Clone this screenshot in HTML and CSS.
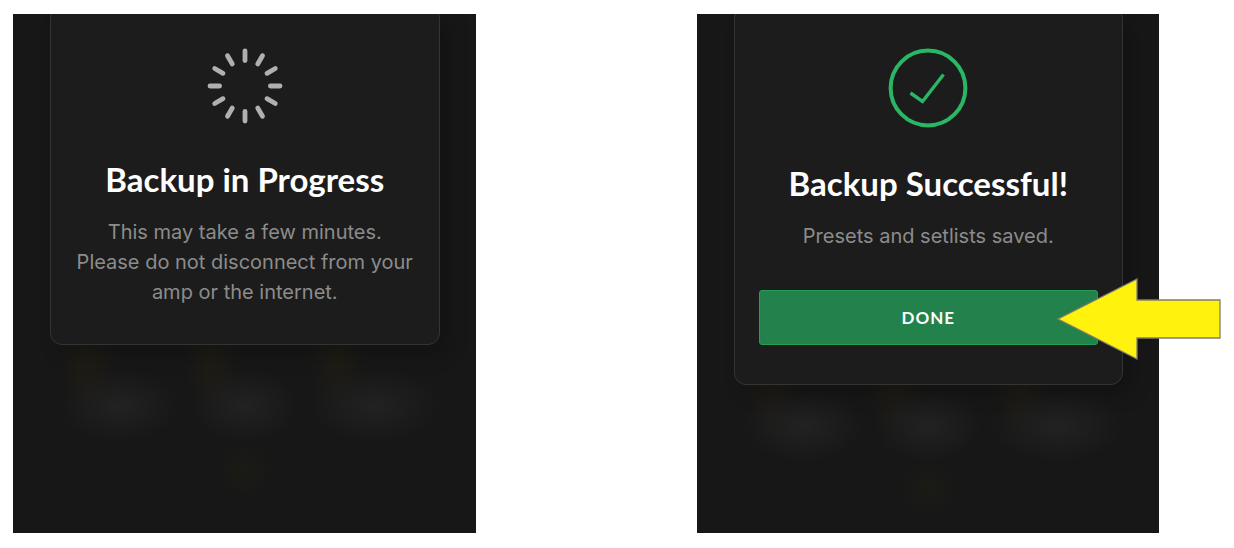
FILE: index.html
```html
<!DOCTYPE html>
<html lang="en">
<head>
<meta charset="utf-8">
<meta name="viewport" content="width=device-width, initial-scale=1">
<title>Backup</title>
<link rel="stylesheet" href="styles.css">
</head>
<body>
<main class="steps">
  <section class="step">
    <div class="screen">
      <div class="backdrop backdrop-progress" aria-hidden="true"></div>
      <div class="card" role="status">
        <svg class="icon" width="76" height="76" viewBox="-38 -38 76 76" fill="none" stroke="#b0b0b0" stroke-width="4.8" stroke-linecap="round" aria-hidden="true">
          <path id="spoke" d="M0-35V-25.4"/>
          <use href="#spoke" transform="rotate(30)"/>
          <use href="#spoke" transform="rotate(60)"/>
          <use href="#spoke" transform="rotate(90)"/>
          <use href="#spoke" transform="rotate(120)"/>
          <use href="#spoke" transform="rotate(150)"/>
          <use href="#spoke" transform="rotate(180)"/>
          <use href="#spoke" transform="rotate(210)"/>
          <use href="#spoke" transform="rotate(240)"/>
          <use href="#spoke" transform="rotate(270)"/>
          <use href="#spoke" transform="rotate(300)"/>
          <use href="#spoke" transform="rotate(330)"/>
        </svg>
        <h1 class="title">Backup in Progress</h1>
        <p class="message">This may take a few minutes.<br>Please do not disconnect from your<br>amp or the internet.</p>
      </div>
    </div>
  </section>
  <section class="step">
    <div class="screen">
      <div class="backdrop backdrop-done" aria-hidden="true"></div>
      <div class="card">
        <svg class="icon" width="80" height="80" viewBox="0 0 80 80" fill="none" stroke="#29b765" aria-hidden="true">
          <circle cx="40" cy="40" r="37.4" stroke-width="4"/>
          <path d="M22.5 45 34.5 53.5 55.5 26.5" stroke-width="3.4"/>
        </svg>
        <h1 class="title">Backup Successful!</h1>
        <p class="message">Presets and setlists saved.</p>
        <button class="done" type="button">DONE</button>
      </div>
    </div>
    <svg class="pointer" width="164" height="84" viewBox="0 0 164 84" aria-hidden="true">
      <path d="M1 42 80 2V23H163V61H80V82Z" fill="#fff20d" stroke="#827f6c" stroke-width="1.3"/>
    </svg>
  </section>
</main>
</body>
</html>
```
FILE: styles.css
```css
* {
  box-sizing: border-box;
}

body {
  margin: 0;
  background: #fff;
  font-family: Inter, "Liberation Sans", sans-serif;
}

.steps {
  display: grid;
  grid-template-columns: 1fr 1fr;
  column-gap: 221px;
  min-height: 100vh;
  padding: 14px 75px 15px 13px;
}

.step {
  position: relative;
  display: grid;
}

.screen {
  position: relative;
  overflow: hidden;
  padding: 0 36px 0 37px;
  background: #171717;
}

/* Faint, out-of-focus controls behind the dialog */
.backdrop {
  position: absolute;
  left: 0;
  right: 0;
  height: 300px;
  background:
    radial-gradient(ellipse 60px 36px at 23% 58%, #222222, transparent),
    radial-gradient(ellipse 54px 36px at 50% 58%, #222222, transparent),
    radial-gradient(ellipse 66px 36px at 78% 58%, #222222, transparent),
    radial-gradient(ellipse 28px 50px at 16% 44%, #1e1c14, transparent),
    radial-gradient(ellipse 28px 50px at 43% 44%, #1e1c14, transparent),
    radial-gradient(ellipse 28px 50px at 70% 44%, #1e1c14, transparent),
    radial-gradient(circle 28px at 50% 79%, #1b1b15, transparent);
}

.backdrop-progress {
  top: 218px;
}

.backdrop-done {
  top: 238px;
}

.card {
  position: relative;
  display: flex;
  flex-direction: column;
  align-items: center;
  margin-top: -8px;
  padding: 41px 24px 37px;
  border: 1px solid #343434;
  border-radius: 12px;
  background: #1c1c1c;
  box-shadow: 10px 10px 20px rgba(0, 0, 0, 0.2);
  text-align: center;
}

.icon {
  display: block;
}

.title {
  margin: 35px 0 18px;
  color: #fff;
  font: 700 33px/40px Lato, sans-serif;
  white-space: nowrap;
}

.message {
  margin: 0;
  color: #8c8c8c;
  font-size: 20px;
  line-height: 30px;
  white-space: nowrap;
}

.done {
  align-self: stretch;
  height: 55px;
  margin: 39px 0 2px;
  padding: 0;
  border: 1px solid #249e57;
  border-radius: 3px;
  background: #23824c;
  color: #fff;
  font: 700 17px/24px Lato, sans-serif;
  letter-spacing: 1px;
}

.pointer {
  position: absolute;
  top: 263px;
  right: -62px;
}
```
